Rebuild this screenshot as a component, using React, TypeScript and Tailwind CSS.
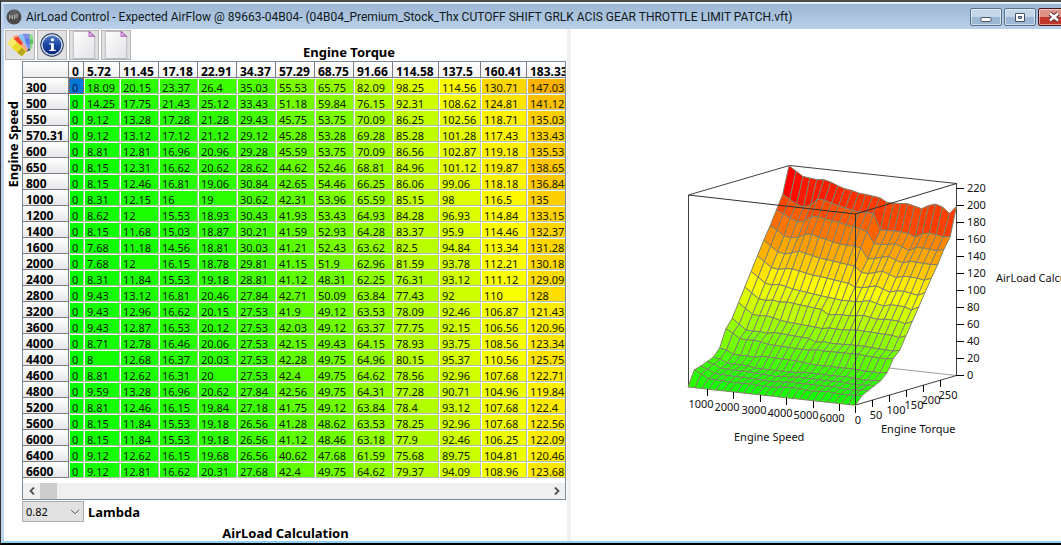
import { useState } from 'react';
import { clsx } from 'clsx';

const torque = [
  '0', '5.72', '11.45', '17.18', '22.91', '34.37', '57.29', '68.75', '91.66', '114.58', '137.5', '160.41', '183.33',
];

// speed followed by the airflow value of every torque column
const rows: number[][] = [
  [300, 0, 18.09, 20.15, 23.37, 26.4, 35.03, 55.53, 65.75, 82.09, 98.25, 114.56, 130.71, 147.03],
  [500, 0, 14.25, 17.75, 21.43, 25.12, 33.43, 51.18, 59.84, 76.15, 92.31, 108.62, 124.81, 141.12],
  [550, 0, 9.12, 13.28, 17.28, 21.28, 29.43, 45.75, 53.75, 70.09, 86.25, 102.56, 118.71, 135.03],
  [570.31, 0, 9.12, 13.12, 17.12, 21.12, 29.12, 45.28, 53.28, 69.28, 85.28, 101.28, 117.43, 133.43],
  [600, 0, 8.81, 12.81, 16.96, 20.96, 29.28, 45.59, 53.75, 70.09, 86.56, 102.87, 119.18, 135.53],
  [650, 0, 8.15, 12.31, 16.62, 20.62, 28.62, 44.62, 52.46, 68.81, 84.96, 101.12, 119.87, 138.65],
  [800, 0, 8.15, 12.46, 16.81, 19.06, 30.84, 42.65, 54.46, 66.25, 86.06, 99.06, 118.18, 136.84],
  [1000, 0, 8.31, 12.15, 16, 19, 30.62, 42.31, 53.96, 65.59, 85.15, 98, 116.5, 135],
  [1200, 0, 8.62, 12, 15.53, 18.93, 30.43, 41.93, 53.43, 64.93, 84.28, 96.93, 114.84, 133.15],
  [1400, 0, 8.15, 11.68, 15.03, 18.87, 30.21, 41.59, 52.93, 64.28, 83.37, 95.9, 114.46, 132.37],
  [1600, 0, 7.68, 11.18, 14.56, 18.81, 30.03, 41.21, 52.43, 63.62, 82.5, 94.84, 113.34, 131.28],
  [2000, 0, 7.68, 12, 16.15, 18.78, 29.81, 41.15, 51.9, 62.96, 81.59, 93.78, 112.21, 130.18],
  [2400, 0, 8.31, 11.84, 15.53, 19.18, 28.81, 41.12, 48.31, 62.25, 76.31, 93.12, 111.12, 129.09],
  [2800, 0, 9.43, 13.12, 16.81, 20.46, 27.84, 42.71, 50.09, 63.84, 77.43, 92, 110, 128],
  [3200, 0, 9.43, 12.96, 16.62, 20.15, 27.53, 41.9, 49.12, 63.53, 78.09, 92.46, 106.87, 121.43],
  [3600, 0, 9.43, 12.87, 16.53, 20.12, 27.53, 42.03, 49.12, 63.37, 77.75, 92.15, 106.56, 120.96],
  [4000, 0, 8.71, 12.78, 16.46, 20.06, 27.53, 42.15, 49.43, 64.15, 78.93, 93.75, 108.56, 123.34],
  [4400, 0, 8, 12.68, 16.37, 20.03, 27.53, 42.28, 49.75, 64.96, 80.15, 95.37, 110.56, 125.75],
  [4600, 0, 8.81, 12.62, 16.31, 20, 27.53, 42.4, 49.75, 64.62, 78.56, 92.96, 107.68, 122.71],
  [4800, 0, 9.59, 13.28, 16.96, 20.62, 27.84, 42.56, 49.75, 64.31, 77.28, 90.71, 104.96, 119.84],
  [5200, 0, 8.81, 12.46, 16.15, 19.84, 27.18, 41.75, 49.12, 63.84, 78.4, 93.12, 107.68, 122.4],
  [5600, 0, 8.15, 11.84, 15.53, 19.18, 26.56, 41.28, 48.62, 63.53, 78.25, 92.96, 107.68, 122.56],
  [6000, 0, 8.15, 11.84, 15.53, 19.18, 26.56, 41.12, 48.46, 63.18, 77.9, 92.46, 106.25, 122.09],
  [6400, 0, 9.12, 12.62, 16.15, 19.68, 26.56, 40.62, 47.68, 61.59, 75.68, 89.75, 104.81, 120.46],
  [6600, 0, 9.12, 12.81, 16.62, 20.31, 27.68, 42.4, 49.75, 64.62, 79.37, 94.09, 108.96, 123.68],
];

// columns scrolled out of the table, still part of the surface
const hiddenColumns: number[][] = [
  [161.9, 157.8, 151.5, 150.5, 151.8, 156.3, 157.1, 154.5, 153.1, 150.7, 149.3, 148.9, 148.7, 147.3, 135.1, 136.9, 138.9, 141, 137.5, 134.9, 138.2, 137.5, 137.3, 136.9, 137.5],
  [178.3, 174.5, 170.3, 167.2, 168.5, 174.9, 175.7, 173.9, 172.9, 171.8, 169.6, 168.4, 167, 164, 151.1, 151.3, 151.7, 153.8, 151.1, 147.3, 152.2, 152.2, 151.7, 150.8, 153.4],
  [194.6, 189.6, 184.6, 182.3, 185.1, 193.9, 192.8, 190.2, 188.3, 186.4, 185, 183.1, 183.6, 183.8, 165, 165.6, 165.6, 165.3, 164.6, 160.8, 166, 167.7, 166.6, 164.9, 166.3],
  [226.2, 220.8, 215.4, 214.4, 213.4, 214.2, 212.3, 208.8, 206.3, 205.2, 202.9, 202.2, 201.2, 200.1, 195.9, 195.3, 196.1, 196.6, 194.7, 192.5, 197.4, 199.8, 197.2, 190.6, 200],
];

const columnWidths = [
  'w-[46px]', 'w-[15px]', 'w-[36px]', 'w-[39px]', 'w-[39px]', 'w-[39px]', 'w-[39px]', 'w-[39px]',
  'w-[39px]', 'w-[39px]', 'w-[46px]', 'w-[42px]', 'w-[46px]', 'w-[46px]',
];

const MAX = 226.2;

function heat(value: number) {
  const t = Math.min(1, Math.max(0, value / MAX));
  const r = Math.round(Math.min(1, t * 2) * 255);
  const g = Math.round(Math.min(1, 2 - t * 2) * 255);
  return `rgb(${r},${g},0)`;
}

function valueAt(speed: number, col: number) {
  return col < 13 ? rows[speed][col + 1] : hiddenColumns[col - 13][speed];
}

function project(speed: number, col: number): [number, number] {
  const x = 116 + (speed / 24) * 167.5 + (col / 16) * 101;
  const y = 358 + (speed / 24) * 18.3 - (col / 16) * 29.5 - valueAt(speed, col) * 0.848;
  return [x, y];
}

function Surface() {
  const quads: { points: string; fill: string }[] = [];
  // far torque columns first so the near ones cover them
  for (let c = 15; c >= 0; c--) {
    for (let s = 0; s < 24; s++) {
      const corners = [[s, c], [s + 1, c], [s + 1, c + 1], [s, c + 1]];
      quads.push({
        points: corners.map(([a, b]) => project(a, b).map((n) => n.toFixed(1)).join(',')).join(' '),
        fill: heat(Math.max(...corners.map(([a, b]) => valueAt(a, b)))),
      });
    }
  }
  return (
    <g stroke="#808068" strokeWidth="1" strokeLinejoin="round">
      {quads.map((q, i) => (
        <polygon key={i} points={q.points} fill={q.fill} />
      ))}
    </g>
  );
}

const speedTicks = [
  { x: 135.5, y: 360, label: '1000', tx: 129, ty: 379 },
  { x: 161.5, y: 363, label: '2000', tx: 155, ty: 382 },
  { x: 188.5, y: 366, label: '3000', tx: 182, ty: 385 },
  { x: 214.5, y: 369, label: '4000', tx: 208, ty: 388 },
  { x: 241.5, y: 372, label: '5000', tx: 234, ty: 390 },
  { x: 267.5, y: 375, label: '6000', tx: 260, ty: 393 },
  { x: 283.5, y: 377, label: '0', tx: 286, ty: 395 },
];

const torqueTicks = [
  { x: 300.5, y: 371, label: '50', tx: 304, ty: 390 },
  { x: 317.5, y: 366, label: '100', tx: 324, ty: 385 },
  { x: 334.5, y: 361, label: '150', tx: 342, ty: 380 },
  { x: 351.5, y: 356, label: '200', tx: 359, ty: 375 },
  { x: 368.5, y: 351, label: '250', tx: 376, ty: 370 },
];

const loadTicks = [0, 20, 40, 60, 80, 100, 120, 140, 160, 180, 200, 220];

function Chart() {
  return (
    <svg
      viewBox="-1 0 490 512"
      preserveAspectRatio="xMinYMin meet"
      className="h-full w-full font-['Noto_Sans',sans-serif]"
      role="img"
      aria-label="AirLoad Calculation surface"
    >
      <g stroke="#404040" strokeWidth="1" fill="none">
        <path d="M116.5 166 L217.5 136.5 L384.5 154.5" />
        <path d="M217.5 328 L384.5 346.5" stroke="#a0a0a0" />
        <path d="M116.5 166 V358" />
        <path d="M283.5 376 L384.5 346.5 V154" />
      </g>
      <Surface />
      <g stroke="#303030" strokeWidth="1" fill="none">
        <path d="M116.5 166 L283.5 185 L384.5 154.5" />
        <path d="M283.5 185 V376" />
      </g>
      <g stroke="#000" strokeWidth="1">
        {[...speedTicks, ...torqueTicks].map((t) => (
          <line key={t.label} x1={t.x} x2={t.x} y1={t.y} y2={t.y + 7} />
        ))}
        {loadTicks.map((v) => {
          const y = Math.round(346 - v * 0.848) + 0.5;
          return <line key={v} x1="384" x2="392" y1={y} y2={y} />;
        })}
      </g>
      <g fontSize="11" fill="#111">
        {[...speedTicks, ...torqueTicks].map((t) => (
          <text key={t.label} x={t.tx} y={t.ty} textAnchor="middle">{t.label}</text>
        ))}
        {loadTicks.map((v) => (
          <text key={v} x="395" y={Math.round(350 - v * 0.848)}>{v}</text>
        ))}
        <text x="162" y="412">Engine Speed</text>
        <text x="309" y="404">Engine Torque</text>
        <text x="424" y="253">AirLoad Calculation</text>
      </g>
    </svg>
  );
}

function PaletteIcon() {
  return (
    <svg viewBox="0 0 30 30" className="size-full">
      <path d="M24 3 L29 4 L28 18 L25 22 Z" fill="#8fdc8c" />
      <path d="M24 9 h5 v5 h-5z" fill="#54c45c" />
      <path d="M17 3 L25 3 L26 18 L22 22 L19 16 Z" fill="#7f8fe8" />
      <path d="M18 8 L25 8 L25 14 L20 14 Z" fill="#5f7be0" />
      <path d="M12 5 L18 3 L24 20 L22 22 Z" fill="#8fc3f4" />
      <path d="M7 6 L12 4 L24 20 L21 23 Z" fill="#f9a58c" />
      <path d="M8 8 L13 6 L18 13 L14 17 Z" fill="#f0442a" />
      <path d="M1 13 L7 7 L22 22 L17 27 Z" fill="#f7ea6a" />
      <path d="M6 18 L12 12 L22 22 L17 27 Z" fill="#ecd92c" />
      <path d="M12 23 L17 18 L21 22 L17 27 Z" fill="#b9a614" />
      <path d="M22 22 L25 18 L26 21 Z" fill="#405060" />
    </svg>
  );
}

function InfoIcon() {
  return (
    <svg viewBox="0 0 30 30" className="size-full">
      <defs>
        <linearGradient id="info" x1="0" y1="0" x2="0" y2="1">
          <stop offset="0" stopColor="#4f78c8" />
          <stop offset=".5" stopColor="#1c45a4" />
          <stop offset="1" stopColor="#0c2878" />
        </linearGradient>
      </defs>
      <circle cx="15" cy="15" r="12.5" fill="#1c2a52" />
      <circle cx="15" cy="15" r="11.5" fill="#d4dcec" />
      <circle cx="15" cy="15" r="10" fill="url(#info)" />
      <circle cx="15.5" cy="9.5" r="1.8" fill="#fff" />
      <path d="M12 13 h5 v7 h2 v1.5 h-7 V20 h2 v-5.5 h-2z" fill="#fff" />
    </svg>
  );
}

function PageIcon() {
  return (
    <svg viewBox="0 0 30 30" className="size-full">
      <defs>
        <linearGradient id="page" x1="0" y1="0" x2="1" y2="1">
          <stop offset="0" stopColor="#fcfcfc" />
          <stop offset="1" stopColor="#e4e4e8" />
        </linearGradient>
      </defs>
      <path d="M3.5 .5 H20 L26.5 6 V29.5 H3.5 Z" fill="url(#page)" stroke="#b4b4bc" />
      <path d="M20.5 .5 V5.5 H26 Z" fill="#ecd8f0" stroke="#b060b8" strokeWidth="1.2" />
    </svg>
  );
}

const tools = [
  { label: 'Colors', icon: PaletteIcon },
  { label: 'Info', icon: InfoIcon },
  { label: 'Copy', icon: PageIcon },
  { label: 'Paste', icon: PageIcon },
];

const windowButton = 'flex h-[18px] shrink-0 items-center justify-center rounded-[2px] border shadow-[inset_0_0_0_1px_rgba(255,255,255,.5)]';
const blueButton = 'w-8 border-[#5a7086] bg-linear-to-b from-[#c4d6ea] from-50% to-[#9db8d4] to-50%';

function TitleBar() {
  return (
    <header className="flex h-[25px] shrink-0 items-center gap-1 overflow-hidden bg-linear-to-b from-[#9db6d3] to-[#b9d1ea] pl-0.5">
      <svg viewBox="0 0 16 16" className="size-4 shrink-0">
        <circle cx="8" cy="8" r="7.5" fill="#4a4a4a" />
        <circle cx="8" cy="6" r="5" fill="#5e5e5e" />
        <path d="M3.5 10 V6 L6.5 10 V6 M8.5 10 V6 H12 M8.5 8 H11.5" stroke="#a8a8a8" fill="none" />
      </svg>
      <h1 className="flex-1 truncate font-['Roboto',sans-serif] text-[12px] leading-4 text-[#101820]">
        AirLoad Control - Expected AirFlow @ 89663-04B04- (04B04_Premium_Stock_Thx CUTOFF SHIFT GRLK ACIS GEAR THROTTLE LIMIT PATCH.vft)
      </h1>
      <div className="-mr-[9px] flex shrink-0 gap-0.5">
        <button aria-label="Minimize" className={clsx(windowButton, blueButton)}>
          <svg viewBox="0 0 12 12" className="size-3">
            <rect x="1" y="6.5" width="10" height="4" rx="1" fill="#fff" stroke="#4a5460" />
          </svg>
        </button>
        <button aria-label="Maximize" className={clsx(windowButton, blueButton)}>
          <svg viewBox="0 0 12 12" className="size-3">
            <path d="M1.5 2.5 h9 v8 h-9z M4.5 5.5 v2 h3 v-2z" fill="#fff" fillRule="evenodd" stroke="#4a5460" />
          </svg>
        </button>
        <button
          aria-label="Close"
          className={clsx(windowButton, 'w-8 border-[#4a1418] bg-linear-to-b from-[#dd9084] from-50% to-[#c0382a] to-50%')}
        >
          <svg viewBox="0 0 12 12" className="size-3">
            <path d="M2 2.5 L10 9.5 M10 2.5 L2 9.5" stroke="#5a3038" strokeWidth="4.5" />
            <path d="M2 2.5 L10 9.5 M10 2.5 L2 9.5" stroke="#fff" strokeWidth="2.5" />
          </svg>
        </button>
      </div>
    </header>
  );
}

function MapTable() {
  const [selected, setSelected] = useState('0-0');

  return (
    <div className="min-w-0 flex-1 overflow-hidden border border-[#7a8a99]">
      <table className="w-[549px] table-fixed border-separate border-spacing-0">
        <colgroup>
          {columnWidths.map((w, i) => (
            <col key={i} className={w} />
          ))}
        </colgroup>
        <thead>
          <tr>
            <th className="border-r border-b border-[#7c7c84] bg-linear-to-b from-white to-[#ececee]" />
            {torque.map((t) => (
              <th
                key={t}
                scope="col"
                className="border-r border-b border-[#7c7c84] bg-linear-to-b from-white to-[#f2f2f4] pt-[5px] pl-[3px] text-left text-[12px] leading-[10px] font-bold"
              >
                {t}
              </th>
            ))}
          </tr>
        </thead>
        <tbody>
          {rows.map(([speed, ...values], r) => (
            <tr key={speed}>
              <th
                scope="row"
                className="border-r border-b border-[#7c7c84] bg-linear-to-b from-white to-[#e8e8ea] pt-[5px] pl-[3px] text-left text-[12px] leading-[10px] font-bold"
              >
                {speed}
              </th>
              {values.map((v, c) => {
                const active = selected === `${r}-${c}`;
                return (
                  <td
                    key={c}
                    onClick={() => setSelected(`${r}-${c}`)}
                    className={clsx(
                      'border pt-1 pl-[2px] text-[11px] leading-[10px]',
                      active
                        ? 'border-dotted border-[#c06010] text-[#001848]'
                        : 'border-t-[#f4fff0] border-r-[#b4bcae] border-b-[#b4bcae] border-l-[#f4fff0] text-[#102000]'
                    )}
                    style={{ backgroundColor: active ? '#0078d7' : heat(v) }}
                  >
                    {v}
                  </td>
                );
              })}
            </tr>
          ))}
        </tbody>
      </table>
      <div className="mt-[5px] flex h-4 items-stretch justify-between bg-[#f0f0f0]">
        <button aria-label="Scroll left" className="flex w-[17px] items-center justify-center">
          <svg viewBox="0 0 8 8" className="size-2">
            <path d="M6 .5 L2.5 4 L6 7.5" fill="none" stroke="#505050" strokeWidth="1.8" />
          </svg>
        </button>
        <div className="flex-1">
          <div className="h-full w-[17px] bg-[#cdcdcd]" />
        </div>
        <button aria-label="Scroll right" className="flex w-[17px] items-center justify-center">
          <svg viewBox="0 0 8 8" className="size-2">
            <path d="M2 .5 L5.5 4 L2 7.5" fill="none" stroke="#505050" strokeWidth="1.8" />
          </svg>
        </button>
      </div>
    </div>
  );
}

export default function App() {
  return (
    <div className="flex h-screen flex-col overflow-hidden border-t-2 border-b-2 border-l border-t-[#4c4c48] border-b-black border-l-[#303030] bg-white font-['Noto_Sans',sans-serif] text-black">
      <div className="flex min-h-0 flex-1 flex-col border-t-2 border-b-2 border-l-[3px] border-t-[#e4eef8] border-b-[#8fd0ec] border-l-[#c0d4ee]">
        <TitleBar />
        <div className="flex min-h-0 flex-1">
          <section className="flex w-[563px] shrink-0 flex-col">
            <div className="flex h-[33px] items-start pt-px pl-px">
              <div className="flex gap-0.5">
                {tools.map(({ label, icon: Icon }) => (
                  <button key={label} aria-label={label} className="size-[30px] border border-[#b4b4b4] bg-[#e1e1e1]">
                    <Icon />
                  </button>
                ))}
              </div>
              <h2 className="flex-1 self-end pb-px text-center text-[13px] leading-4 font-bold">Engine Torque</h2>
            </div>
            <div className="flex pr-px">
              <div className="flex w-[18px] shrink-0 items-start justify-center pt-10">
                <span className="rotate-180 text-[13px] leading-4 font-bold whitespace-nowrap [writing-mode:vertical-rl]">
                  Engine Speed
                </span>
              </div>
              <MapTable />
            </div>
            <div className="flex items-center gap-1 pt-px pl-[18px]">
              <div className="relative">
                <select
                  id="lambda"
                  defaultValue="0.82"
                  className="block h-[21px] w-[62px] appearance-none border border-[#adadad] bg-[#e1e1e1] pl-[3px] text-[11px] leading-4"
                >
                  <option>0.82</option>
                </select>
                <svg viewBox="0 0 10 6" className="pointer-events-none absolute top-2 right-1 h-1.5 w-2.5">
                  <path d="M1 .8 L5 4.8 L9 .8" fill="none" stroke="#505050" />
                </svg>
              </div>
              <label htmlFor="lambda" className="text-[13px] leading-4 font-bold">Lambda</label>
            </div>
            <h2 className="pt-[3px] text-center text-[13px] leading-4 font-bold">AirLoad Calculation</h2>
          </section>
          <div className="w-1 shrink-0 bg-[#f0f0f0]" />
          <section className="min-w-0 flex-1">
            <Chart />
          </section>
        </div>
      </div>
    </div>
  );
}
